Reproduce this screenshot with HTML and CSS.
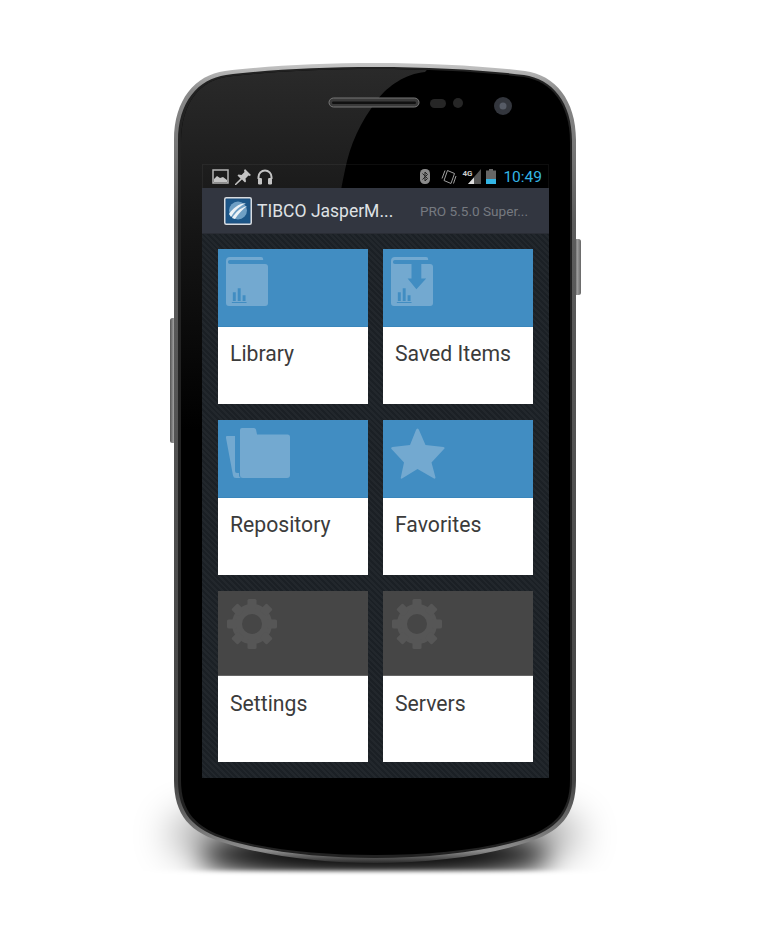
FILE: index.html
```html
<!DOCTYPE html>
<html lang="en">
<head>
<meta charset="utf-8">
<title>TIBCO JasperMobile</title>
<link rel="stylesheet" href="styles.css">
</head>
<body>
<main class="stage">
  <svg class="phone-art" width="766" height="934" viewBox="0 0 766 934" aria-hidden="true">
    <defs>
      <linearGradient id="rim" x1="0" y1="0" x2="0" y2="1">
        <stop offset="0" stop-color="#c8c8c8"/>
        <stop offset=".035" stop-color="#8a8a8a"/>
        <stop offset=".2" stop-color="#5c5c5c"/>
        <stop offset=".9" stop-color="#444"/>
        <stop offset=".985" stop-color="#8c8c8c"/>
        <stop offset="1" stop-color="#2a2a2a"/>
      </linearGradient>
      <linearGradient id="glare" x1="0" y1="0" x2="0" y2="1">
        <stop offset="0" stop-color="#2b2b2b"/>
        <stop offset=".45" stop-color="#161616"/>
        <stop offset="1" stop-color="#000"/>
      </linearGradient>
      <linearGradient id="btn" x1="0" y1="0" x2="1" y2="0">
        <stop offset="0" stop-color="#555"/>
        <stop offset=".5" stop-color="#999"/>
        <stop offset="1" stop-color="#666"/>
      </linearGradient>
      <filter id="blurWide" filterUnits="userSpaceOnUse" x="0" y="600" width="766" height="334"><feGaussianBlur stdDeviation="20"/></filter>
      <filter id="blurMid" filterUnits="userSpaceOnUse" x="0" y="600" width="766" height="334"><feGaussianBlur stdDeviation="12"/></filter>
      <filter id="blurEdge" filterUnits="userSpaceOnUse" x="0" y="600" width="766" height="334"><feGaussianBlur stdDeviation="2"/></filter>
      <clipPath id="shadowClip"><rect x="0" y="600" width="766" height="271"/></clipPath>
      <clipPath id="faceClip">
        <path d="M375 69C320 69 265 72 226 77C199 81 181 104 181 142L181 780C181 812 196 828 228 838C268 850 320 855 375 855C430 855 482 850 522 838C554 828 570 812 570 780L570 142C570 104 551 81 524 77C485 72 430 69 375 69Z"/>
      </clipPath>
    </defs>
    <g filter="url(#blurEdge)">
      <g clip-path="url(#shadowClip)">
        <ellipse class="shadow-wide" cx="375" cy="835" rx="205" ry="30" filter="url(#blurWide)"/>
        <ellipse class="shadow-tight" cx="375" cy="856" rx="175" ry="20" filter="url(#blurMid)"/>
      </g>
    </g>
    <rect x="170" y="318" width="7" height="125" rx="2.500" fill="url(#btn)"/>
    <rect x="574" y="239" width="7" height="56" rx="2.500" fill="url(#btn)"/>
    <path fill="url(#rim)" d="M375 63C320 63 265 66 225 71C195 75 174 100 174 140L174 780C174 815 190 833 225 843C265 856 320 863 375 863C430 863 485 856 525 843C560 833 576 815 576 780L576 140C576 100 555 75 525 71C485 66 430 63 375 63Z"/>
    <path class="rim-inner" d="M375 67C320 67 265 70 226 75C198 79 178 102 178 141L178 780C178 813 193 830 227 840C267 852 320 858 375 858C430 858 483 852 523 840C557 830 572 813 572 780L572 141C572 102 552 79 524 75C485 70 430 67 375 67Z"/>
    <path class="face" d="M375 69C320 69 265 72 226 77C199 81 181 104 181 142L181 780C181 812 196 828 228 838C268 850 320 855 375 855C430 855 482 850 522 838C554 828 570 812 570 780L570 142C570 104 551 81 524 77C485 72 430 69 375 69Z"/>
    <g clip-path="url(#faceClip)">
      <path fill="url(#glare)" d="M170 60L436 60L425 72C405 74 388 86 378 99C360 122 350 145 345 170C336 210 325 300 300 430L170 430Z"/>
    </g>
    <rect class="speaker" x="329" y="98" width="90" height="9" rx="4.500"/>
    <rect class="speaker-mesh" x="332" y="101.500" width="84" height="2.500" rx="1.200"/>
    <rect class="sensor" x="430" y="99" width="16" height="9" rx="4.500"/>
    <circle class="sensor" cx="458" cy="103" r="5"/>
    <circle class="lens-outer" cx="503" cy="106" r="9"/>
    <circle class="lens-inner" cx="503" cy="106" r="3.500"/>
  </svg>

  <section class="screen">
    <header class="status-bar">
      <div class="status-group">
        <svg class="st-icon" width="17" height="15" viewBox="0 0 17 15"><path class="st-stroke" d="M1 1h15v13H1z"/><path class="st-fill" d="M2 13V10l3-3 3 2 3-1 4 3v2z"/></svg>
        <svg class="st-icon" width="16" height="16" viewBox="0 0 16 16"><path class="st-fill" d="M10 0l6 6-1.500 1-1-.5-3 3 .5 3-1 1-3-3L1 16l-1 0 0-1 5.500-5.500-3-3 1-1 3 .5 3-3L9 1.500z"/></svg>
        <svg class="st-icon" width="16" height="16" viewBox="0 0 16 16"><path class="st-arc" d="M1.500 10V8a6.500 6.500 0 0 1 13 0v2"/><rect class="st-fill" x="1" y="9" width="4" height="6.500" rx="1.200"/><rect class="st-fill" x="11" y="9" width="4" height="6.500" rx="1.200"/></svg>
      </div>
      <div class="status-group status-right">
        <svg class="st-icon bt" width="10" height="15" viewBox="0 0 10 15"><rect class="st-dim" width="10" height="15" rx="4.500"/><path class="st-bt" d="M2.500 4.500l5 5L5 12V3l2.500 2.500-5 5"/></svg>
        <svg class="st-icon rot" width="16" height="16" viewBox="0 0 16 16"><path class="st-thin" d="M6.500 1.500l7 3-3.500 10-7-3zM1 9.500L4 1.500M15 7l-2.500 7.500"/></svg>
        <span class="net">4G</span>
        <svg class="st-icon sig" width="13" height="15" viewBox="0 0 13 15"><path class="st-sig-dim" d="M13 0v15H0z"/><path class="st-sig" d="M6 8.500V15H0z"/></svg>
        <svg class="st-icon bat" width="10" height="15" viewBox="0 0 10 15"><path class="st-bat-dim" d="M3 0h4v1.500h3V15H0V1.500h3z"/><rect class="st-bat" y="10" width="10" height="5"/></svg>
        <span class="clock">10:49</span>
      </div>
    </header>

    <div class="action-bar">
      <div class="brand">
        <svg class="logo" width="28" height="28" viewBox="0 0 28 28">
          <rect class="logo-frame" x=".75" y=".75" width="26.500" height="26.500" rx="1.500"/>
          <rect class="logo-blue" x="2.500" y="2.500" width="23" height="23"/>
          <circle class="logo-disc" cx="14" cy="13.500" r="9"/>
          <path class="logo-swoosh" d="M5 17C9 11 14 7 22 6C16 9 11 13 7 20ZM8 21C12 15 16 11 23 9C18 13 14 17 11 22Z"/>
        </svg>
        <span class="app-title">TIBCO JasperM...</span>
      </div>
      <span class="app-sub">PRO 5.5.0 Super...</span>
    </div>

    <div class="dash">
      <article class="tile">
        <div class="tile-head blue">
          <svg class="tile-icon" width="43" height="51" viewBox="0 0 44 52">
            <path class="glyph" d="M4 0H36a2 2 0 0 1 2 2V3H4a1.500 1.500 0 0 0 0 4H40a3 3 0 0 1 3 3V47a3 3 0 0 1-3 3H3a3 3 0 0 1-3-3V4a4 4 0 0 1 4-4Z"/>
            <path class="cut-blue" d="M6 46h15v1H6zM7 36h3v9H7zM12 32h3v13h-3zM17 39h3v6h-3z"/>
          </svg>
        </div>
        <div class="tile-body"><span class="tile-label">Library</span></div>
      </article>

      <article class="tile">
        <div class="tile-head blue">
          <svg class="tile-icon" width="43" height="51" viewBox="0 0 44 52">
            <path class="glyph" d="M4 0H36a2 2 0 0 1 2 2V3H4a1.500 1.500 0 0 0 0 4H40a3 3 0 0 1 3 3V47a3 3 0 0 1-3 3H3a3 3 0 0 1-3-3V4a4 4 0 0 1 4-4Z"/>
            <path class="cut-blue" d="M6 46h15v1H6zM7 36h3v9H7zM12 32h3v13h-3zM17 39h3v6h-3zM21 7H31V22H36L26 33L17 22H21Z"/>
          </svg>
        </div>
        <div class="tile-body"><span class="tile-label">Saved Items</span></div>
      </article>

      <article class="tile">
        <div class="tile-head blue">
          <svg class="tile-icon" width="65" height="52" viewBox="0 0 65 52">
            <path class="glyph" d="M16 0H28a2.500 2.500 0 0 1 2 1.500L31 6.500H61.500a2.500 2.500 0 0 1 2.500 2.500V47a3 3 0 0 1-3 3H17a3 3 0 0 1-3-3V2a2 2 0 0 1 2-2Z"/>
            <path class="glyph" d="M1 8H9V43a2 2 0 0 0 2 2H13V47a3 3 0 0 0 2 3H10a3 3 0 0 1-3-2.500L0 10a1.500 1.500 0 0 1 1-2Z"/>
          </svg>
        </div>
        <div class="tile-body"><span class="tile-label">Repository</span></div>
      </article>

      <article class="tile">
        <div class="tile-head blue">
          <svg class="tile-icon" width="54" height="52" viewBox="0 0 54 52">
            <path class="glyph" d="M26.500 0.500Q27.500 0.500 28 2L34.500 17L52.500 19Q54.500 19.800 53 21L40.500 34.500L44.500 49.500Q44.500 51 43 50.500L26.500 41L11 50.500Q9.500 51 9.800 49.500L13 34.500L0.500 21Q-.5 19.500 1.500 19L19 17L25 2Q25.500 .5 26.500 .5Z"/>
          </svg>
        </div>
        <div class="tile-body"><span class="tile-label">Favorites</span></div>
      </article>

      <article class="tile tall">
        <div class="tile-head gray">
          <svg class="tile-icon" width="52" height="52" viewBox="0 0 52 52">
            <g class="gear">
              <circle class="gear-ring" cx="26" cy="25" r="15"/>
              <rect class="gear-tooth" x="21.500" y="0" width="9" height="10" rx="1.500"/>
              <rect class="gear-tooth" x="21.500" y="40" width="9" height="10" rx="1.500"/>
              <rect class="gear-tooth" x="1" y="20.500" width="10" height="9" rx="1.500"/>
              <rect class="gear-tooth" x="41" y="20.500" width="10" height="9" rx="1.500"/>
              <rect class="gear-tooth" x="21.500" y="0" width="9" height="10" rx="1.500" transform="rotate(45 26 25)"/>
              <rect class="gear-tooth" x="21.500" y="0" width="9" height="10" rx="1.500" transform="rotate(135 26 25)"/>
              <rect class="gear-tooth" x="21.500" y="0" width="9" height="10" rx="1.500" transform="rotate(225 26 25)"/>
              <rect class="gear-tooth" x="21.500" y="0" width="9" height="10" rx="1.500" transform="rotate(315 26 25)"/>
            </g>
          </svg>
        </div>
        <div class="tile-body"><span class="tile-label">Settings</span></div>
      </article>

      <article class="tile tall">
        <div class="tile-head gray">
          <svg class="tile-icon" width="52" height="52" viewBox="0 0 52 52">
            <g class="gear">
              <circle class="gear-ring" cx="26" cy="25" r="15"/>
              <rect class="gear-tooth" x="21.500" y="0" width="9" height="10" rx="1.500"/>
              <rect class="gear-tooth" x="21.500" y="40" width="9" height="10" rx="1.500"/>
              <rect class="gear-tooth" x="1" y="20.500" width="10" height="9" rx="1.500"/>
              <rect class="gear-tooth" x="41" y="20.500" width="10" height="9" rx="1.500"/>
              <rect class="gear-tooth" x="21.500" y="0" width="9" height="10" rx="1.500" transform="rotate(45 26 25)"/>
              <rect class="gear-tooth" x="21.500" y="0" width="9" height="10" rx="1.500" transform="rotate(135 26 25)"/>
              <rect class="gear-tooth" x="21.500" y="0" width="9" height="10" rx="1.500" transform="rotate(225 26 25)"/>
              <rect class="gear-tooth" x="21.500" y="0" width="9" height="10" rx="1.500" transform="rotate(315 26 25)"/>
            </g>
          </svg>
        </div>
        <div class="tile-body"><span class="tile-label">Servers</span></div>
      </article>
    </div>
  </section>
</main>
</body>
</html>
```

FILE: styles.css
```css
* { box-sizing: border-box; }
html, body { margin: 0; padding: 0; background: #fff; }
body { font-family: Roboto, "Liberation Sans", sans-serif; }

.stage {
  position: relative;
  width: 766px;
  height: 934px;
  padding: 164px 217px 0 202px;
  overflow: hidden;
}
.phone-art { position: absolute; left: 0; top: 0; }
.shadow-wide { fill: #000; opacity: .5; }
.shadow-tight { fill: #000; }
.rim-inner { fill: #222; }
.face { fill: #000; }
.speaker { fill: #3a3a3a; stroke: #777; stroke-width: 1; }
.speaker-mesh { fill: #111; }
.sensor { fill: #262626; }
.lens-outer { fill: #33363d; }
.lens-inner { fill: #565b66; }

.screen { position: relative; width: 347px; height: 614px; display: flex; flex-direction: column; }

.status-bar {
  height: 24px;
  display: flex;
  justify-content: space-between;
  align-items: center;
  padding: 0 6px 0 9px;
  border: 1px solid rgba(255, 255, 255, .05);
  border-bottom: 0;
}
.status-group { display: flex; align-items: center; gap: 6px; }
.status-right { gap: 0; }
.st-icon { display: block; flex: none; }
.st-stroke { fill: none; stroke: #b4b4b4; stroke-width: 1.500; }
.st-fill { fill: #c4c4c4; }
.st-arc { fill: none; stroke: #c4c4c4; stroke-width: 2; }
.st-dim { fill: #8a8a8a; }
.st-bt { fill: none; stroke: #222; stroke-width: 1; }
.st-thin { fill: none; stroke: #a0a0a0; stroke-width: 1; }
.st-sig-dim { fill: #555; }
.st-sig { fill: #ddd; }
.st-bat-dim { fill: #666; }
.st-bat { fill: #33b5e5; }
.bt { margin-right: 11px; }
.rot { margin-right: 5px; }
.net { width: 6px; align-self: flex-start; padding-top: 3px; font-size: 8px; font-weight: 700; line-height: 8px; color: #ccc; white-space: nowrap; }
.sig { margin-right: 5px; }
.bat { margin-right: 7px; }
.clock { font-size: 15.500px; line-height: 20px; color: #33b5e5; }

.action-bar {
  height: 46px;
  flex: none;
  background: #323640;
  border-bottom: 1px solid #2a2d35;
  display: flex;
  align-items: center;
  justify-content: space-between;
  padding: 0 21px 0 22px;
}
.brand { display: flex; align-items: center; gap: 5px; }
.logo { display: block; }
.logo-frame { fill: #1e5080; stroke: #d8dce0; stroke-width: 1.500; }
.logo-blue { fill: #1c5688; }
.logo-disc { fill: #6f9fc4; }
.logo-swoosh { fill: #eef3f7; }
.app-title { font-size: 17.500px; line-height: 22px; color: #dfe1e4; white-space: nowrap; }
.app-sub { font-size: 13.600px; line-height: 16px; color: #767a80; white-space: nowrap; }

.dash {
  flex: 1;
  display: grid;
  grid-template-columns: 150px 150px;
  grid-template-rows: 155px 155px 171px;
  column-gap: 15px;
  row-gap: 16px;
  padding: 15px 16px 16px;
  background: repeating-linear-gradient(45deg, #1b2025 0 2px, #22272c 2px 4px);
}
.tile { display: flex; flex-direction: column; background: #fff; }
.tile-head { height: 77.500px; flex: none; padding: 8px; }
.tile.tall .tile-head { height: 85px; }
.blue { background: #418dc2; border-bottom: 1px solid #3a86bb; }
.gray { background: #464646; border-bottom: 1px solid #666; }
.tile-icon { display: block; }
.glyph { fill: #73a9d0; }
.cut-blue { fill: #418dc2; }
.gear-ring { fill: none; stroke: #565656; stroke-width: 10; }
.gear-tooth { fill: #565656; }
.tile-body { flex: 1; padding: 14px 12px 0; }
.tile.tall .tile-body { padding-top: 15px; }
.tile-label { display: block; font-size: 21.200px; line-height: 26px; color: #3b3b3b; white-space: nowrap; }
```
